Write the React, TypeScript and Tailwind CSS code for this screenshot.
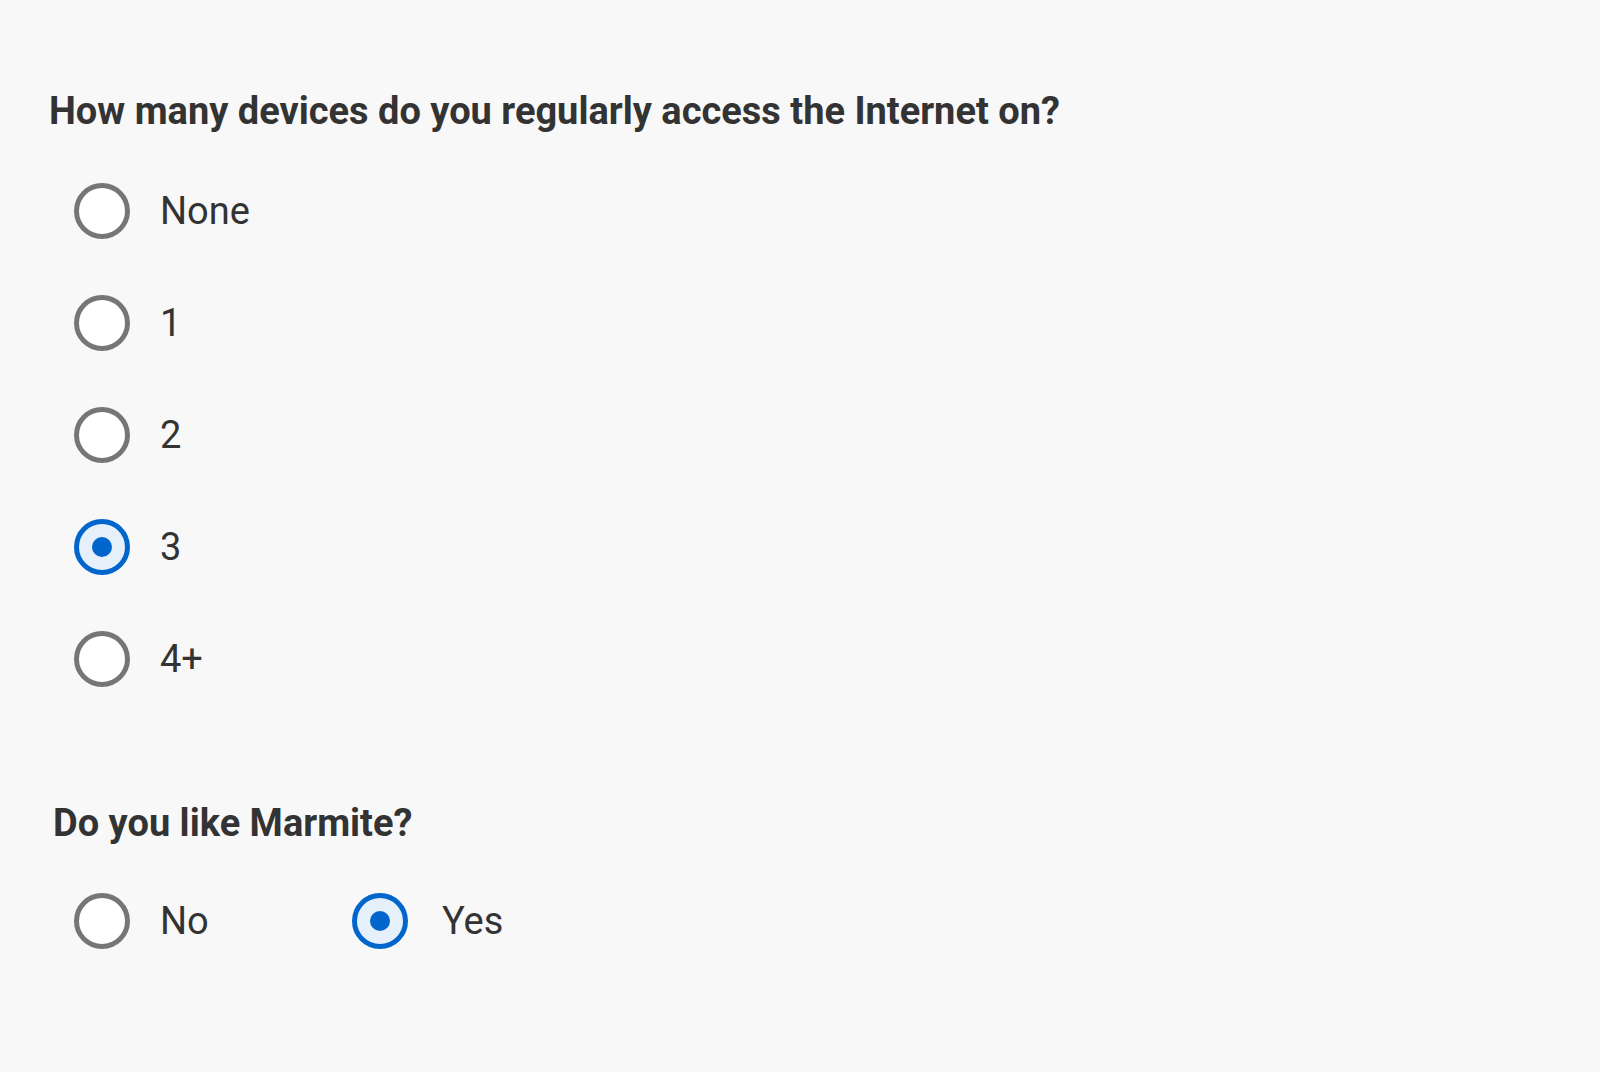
const font = { fontFamily: "Roboto, 'Liberation Sans', sans-serif" };

const Radio = ({ label, checked, wide }: { label: string; checked?: boolean; wide?: boolean }) => {
  return (
    <label className={wide ? "flex h-[56px] items-center gap-[34px]" : "flex h-[56px] items-center gap-[30px]"}>
      <span
        className={
          checked
            ? "flex h-[56px] w-[56px] items-center justify-center rounded-full border-[5px] border-[#0066cc] bg-[#e6f0fa]"
            : "flex h-[56px] w-[56px] items-center justify-center rounded-full border-[5px] border-[#767676] bg-white"
        }
      >
        {checked && <span className="h-[20px] w-[20px] rounded-full bg-[#0066cc]" />}
      </span>
      <span className="text-[38px] leading-[56px] text-[#333333]">{label}</span>
    </label>
  );
};

export default function App() {
  return (
    <div className="min-h-[1072px] bg-[#f8f8f8] pt-[92px]" style={font}>
      <fieldset className="flex flex-col">
        <legend className="pl-[49px] text-[38px] font-bold leading-[38px] text-[#333333]">
          How many devices do you regularly access the Internet on?
        </legend>

        <div className="mt-[53px] flex flex-col gap-[56px] pl-[74px]">
          <Radio label="None" />
          <Radio label="1" />
          <Radio label="2" />
          <Radio label="3" checked />
          <Radio label="4+" />
        </div>
      </fieldset>

      <fieldset className="mt-[117px] flex flex-col">
        <legend className="pl-[53px] text-[38px] font-bold leading-[38px] text-[#333333]">
          Do you like Marmite?
        </legend>

        <div className="mt-[51px] flex flex-row pl-[74px]">
          <div className="w-[278px]">
            <Radio label="No" />
          </div>
          <Radio label="Yes" checked wide />
        </div>
      </fieldset>
    </div>
  );
}
